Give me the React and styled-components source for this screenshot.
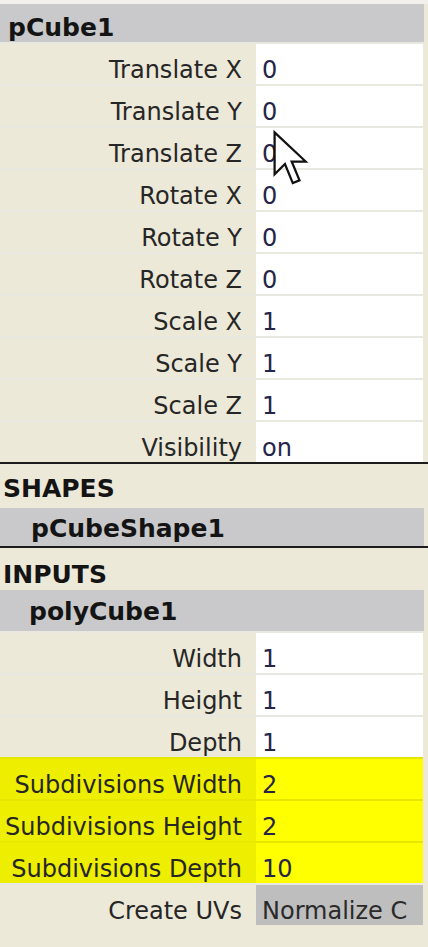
import React from "react";
import styled, { createGlobalStyle } from "styled-components";

const GlobalStyle = createGlobalStyle`
  html, body {
    margin: 0;
    padding: 0;
    background: #ece9d8;
  }
  body {
    font-family: "DejaVu Sans", "Liberation Sans", sans-serif;
    width: 428px;
    height: 947px;
    overflow: hidden;
  }
`;

const Panel = styled.div`
  position: relative;
  width: 428px;
  height: 947px;
  background: #ece9d8;
  display: flex;
  flex-direction: column;
  padding-top: 4px;
  box-sizing: border-box;
  border-top: 0;
`;

const TopStrip = styled.div`
  position: absolute;
  top: 0;
  left: 0;
  right: 0;
  height: 4px;
  background: #f1f0ea;
`;

const NodeBar = styled.div`
  height: ${(p) => p.$h}px;
  box-sizing: border-box;
  margin-right: 4px;
  background: #c9c9cb;
  padding-top: ${(p) => p.$pt}px;
  padding-left: ${(p) => p.$indent}px;
  font-weight: bold;
  font-size: 25px;
  line-height: 29px;
  color: #141414;
`;

const SectionTitle = styled.div`
  height: ${(p) => p.$h}px;
  box-sizing: border-box;
  padding-top: ${(p) => p.$pt}px;
  padding-left: 3px;
  font-weight: bold;
  font-size: 25px;
  line-height: 29px;
  color: #141414;
`;

const Divider = styled.div`
  height: 2px;
  background: #1c1c1c;
`;

const Row = styled.div`
  display: flex;
  height: 42px;
  box-sizing: border-box;
  border-top: 2px solid
    ${(p) => (p.$hl ? "#e6e600" : "#e9e8e0")};
  margin-right: 5px;
  background: ${(p) => (p.$hl ? "#eeee00" : "transparent")};
`;

const Label = styled.div`
  width: 256px;
  flex: none;
  box-sizing: border-box;
  padding-right: 14px;
  padding-top: 12px;
  text-align: right;
  font-size: 24px;
  line-height: 28px;
  color: #262626;
  white-space: nowrap;
`;

const Value = styled.div`
  flex: 1;
  box-sizing: border-box;
  padding-left: 6px;
  padding-top: 12px;
  font-size: 24px;
  line-height: 28px;
  color: ${(p) => (p.$variant === "menu" ? "#2a2a2a" : "#25254a")};
  white-space: nowrap;
  overflow: hidden;
  background: ${(p) =>
    p.$variant === "hl"
      ? "#ffff00"
      : p.$variant === "menu"
      ? "#bebebe"
      : "#ffffff"};
`;

const Cursor = styled.svg`
  position: absolute;
  left: 272px;
  top: 131px;
  width: 36px;
  height: 56px;
  overflow: visible;
`;

const transformRows = [
  ["Translate X", "0"],
  ["Translate Y", "0"],
  ["Translate Z", "0"],
  ["Rotate X", "0"],
  ["Rotate Y", "0"],
  ["Rotate Z", "0"],
  ["Scale X", "1"],
  ["Scale Y", "1"],
  ["Scale Z", "1"],
  ["Visibility", "on"],
];

const inputRows = [
  ["Width", "1"],
  ["Height", "1"],
  ["Depth", "1"],
  ["Subdivisions Width", "2", "hl"],
  ["Subdivisions Height", "2", "hl"],
  ["Subdivisions Depth", "10", "hl"],
  ["Create UVs", "Normalize C", "menu"],
];

function Attr({ label, value, variant }) {
  return (
    <Row $hl={variant === "hl"}>
      <Label>{label}</Label>
      <Value $variant={variant}>{value}</Value>
    </Row>
  );
}

export default function App() {
  return (
    <>
      <GlobalStyle />
      <Panel>
        <TopStrip />
        <NodeBar $h={38} $pt={9} $indent={8}>
          pCube1
        </NodeBar>
        {transformRows.map(([l, v]) => (
          <Attr key={l} label={l} value={v} />
        ))}
        <Divider />
        <SectionTitle $h={44} $pt={10}>
          SHAPES
        </SectionTitle>
        <NodeBar $h={38} $pt={6} $indent={31}>
          pCubeShape1
        </NodeBar>
        <Divider />
        <SectionTitle $h={42} $pt={12}>
          INPUTS
        </SectionTitle>
        <NodeBar $h={41} $pt={7} $indent={29}>
          polyCube1
        </NodeBar>
        {inputRows.map(([l, v, k]) => (
          <Attr key={l} label={l} value={v} variant={k} />
        ))}
        <Cursor viewBox="0 0 12 20">
          <polygon
            points="0.5,0.5 0.5,15.5 4.2,11.8 7,18.6 9.4,17.6 6.6,10.9 11.6,10.9"
            fill="#ffffff"
            stroke="#111111"
            strokeWidth="0.8"
            strokeLinejoin="miter"
          />
        </Cursor>
      </Panel>
    </>
  );
}
